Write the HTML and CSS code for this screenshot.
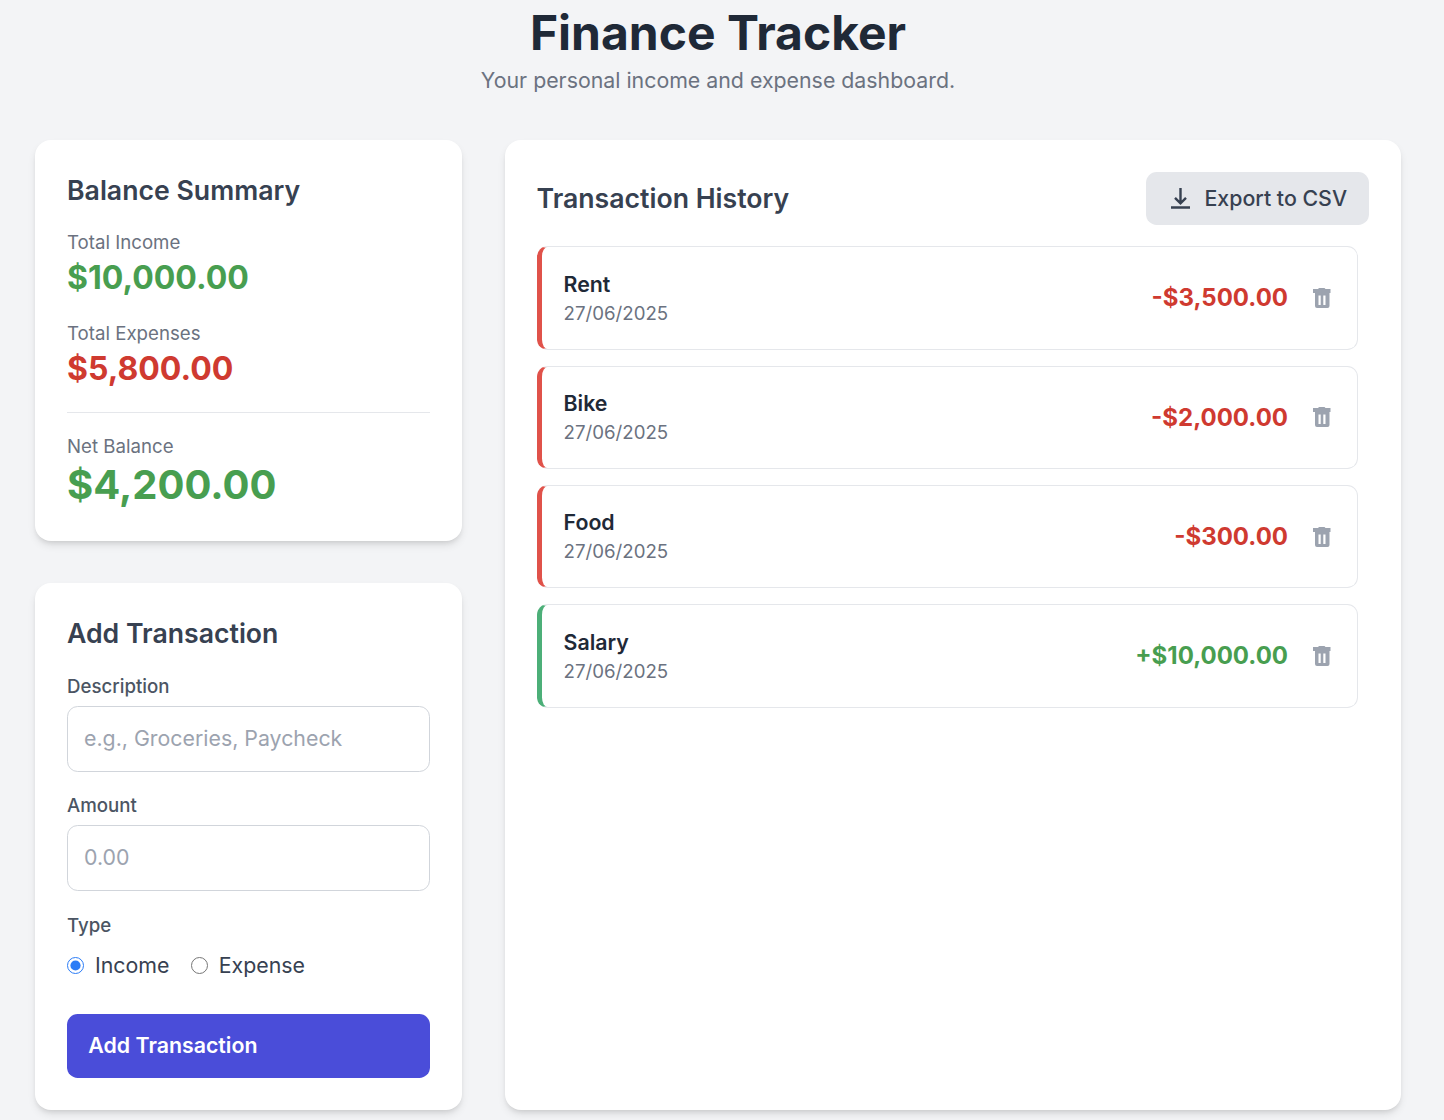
FILE: index.html
```html
<!DOCTYPE html>
<html lang="en">

<head>
    <meta charset="UTF-8">
    <meta name="viewport" content="width=device-width, initial-scale=1.0">
    <title>Finance Tracker</title>
    <link rel="stylesheet" href="styles.css">
</head>

<body>
    <header class="page-header">
        <h1>Finance Tracker</h1>
        <p>Your personal income and expense dashboard.</p>
    </header>

    <main class="layout">
        <div class="side">
            <section class="card summary">
                <h2>Balance Summary</h2>
                <p class="stat-label">Total Income</p>
                <p class="stat-value income">$10,000.00</p>
                <p class="stat-label">Total Expenses</p>
                <p class="stat-value expense">$5,800.00</p>
                <hr>
                <p class="stat-label">Net Balance</p>
                <p class="stat-value net income">$4,200.00</p>
            </section>

            <section class="card">
                <h2>Add Transaction</h2>
                <form>
                    <label class="field-label" for="description">Description</label>
                    <input type="text" id="description" placeholder="e.g., Groceries, Paycheck">
                    <label class="field-label" for="amount">Amount</label>
                    <input type="text" id="amount" placeholder="0.00">
                    <span class="field-label type-label">Type</span>
                    <div class="radios">
                        <label><input type="radio" name="type" checked> Income</label>
                        <label><input type="radio" name="type"> Expense</label>
                    </div>
                    <button type="button" class="add-btn">Add Transaction</button>
                </form>
            </section>
        </div>

        <section class="card history">
            <div class="history-head">
                <h2>Transaction History</h2>
                <button type="button" class="export-btn">
                    <svg width="27" height="27" viewBox="0 0 27 27" fill="none" stroke="currentColor" stroke-width="2.4">
                        <path d="M13.500 3v15M8 12.800l5.500 5.500 5.500-5.500M4 22.500h19" />
                    </svg>
                    Export to CSV
                </button>
            </div>
            <ul class="list">
                <li class="row out">
                    <div><p class="row-name">Rent</p><p class="row-date">27/06/2025</p></div>
                    <div class="row-right"><span class="row-amount expense">-$3,500.00</span>
                        <svg class="trash" width="19" height="22" viewBox="0 0 19 22" fill="currentColor"><path fill-rule="evenodd" d="M7 1h5.500l1 1h5v4h-17.500v-4h5zM3 6h14.500v13a2 2 0 0 1-2 2h-10.500a2 2 0 0 1-2-2zM6.500 8.500v9.500h2.200v-9.500zM11.300 8.500v9.500h2.200v-9.500z" /></svg>
                    </div>
                </li>
                <li class="row out">
                    <div><p class="row-name">Bike</p><p class="row-date">27/06/2025</p></div>
                    <div class="row-right"><span class="row-amount expense">-$2,000.00</span>
                        <svg class="trash" width="19" height="22" viewBox="0 0 19 22" fill="currentColor"><path fill-rule="evenodd" d="M7 1h5.500l1 1h5v4h-17.500v-4h5zM3 6h14.500v13a2 2 0 0 1-2 2h-10.500a2 2 0 0 1-2-2zM6.500 8.500v9.500h2.200v-9.500zM11.300 8.500v9.500h2.200v-9.500z" /></svg>
                    </div>
                </li>
                <li class="row out">
                    <div><p class="row-name">Food</p><p class="row-date">27/06/2025</p></div>
                    <div class="row-right"><span class="row-amount expense">-$300.00</span>
                        <svg class="trash" width="19" height="22" viewBox="0 0 19 22" fill="currentColor"><path fill-rule="evenodd" d="M7 1h5.500l1 1h5v4h-17.500v-4h5zM3 6h14.500v13a2 2 0 0 1-2 2h-10.500a2 2 0 0 1-2-2zM6.500 8.500v9.500h2.200v-9.500zM11.300 8.500v9.500h2.200v-9.500z" /></svg>
                    </div>
                </li>
                <li class="row in">
                    <div><p class="row-name">Salary</p><p class="row-date">27/06/2025</p></div>
                    <div class="row-right"><span class="row-amount income">+$10,000.00</span>
                        <svg class="trash" width="19" height="22" viewBox="0 0 19 22" fill="currentColor"><path fill-rule="evenodd" d="M7 1h5.500l1 1h5v4h-17.500v-4h5zM3 6h14.500v13a2 2 0 0 1-2 2h-10.500a2 2 0 0 1-2-2zM6.500 8.500v9.500h2.200v-9.500zM11.300 8.500v9.500h2.200v-9.500z" /></svg>
                    </div>
                </li>
            </ul>
        </section>
    </main>
</body>

</html>
```

FILE: styles.css
```css
* {
    box-sizing: border-box;
}

body {
    font-family: Inter, "Liberation Sans", sans-serif;
    margin: 0;
    padding: 0 43px 10px 35px;
    background-color: #f3f4f6;
    color: #1f2937;
}

p {
    margin: 0;
}

.page-header {
    text-align: center;
    height: 140px;
}

h1 {
    margin: 0;
    padding-top: 4px;
    font-size: 48px;
    line-height: 58px;
    font-weight: 700;
    color: #1f2937;
}

.page-header p {
    font-size: 21.33px;
    line-height: 28px;
    color: #6b7280;
    margin-top: 4px;
}

.layout {
    display: grid;
    grid-template-columns: repeat(3, 1fr);
    column-gap: 42.67px;
}

.side {
    display: flex;
    flex-direction: column;
    gap: 42.33px;
}

.card {
    background-color: #fff;
    border-radius: 16px;
    padding: 32px;
    box-shadow: 0 5px 8px -1px rgba(0, 0, 0, 0.1), 0 3px 5px -2px rgba(0, 0, 0, 0.1);
}

.history {
    grid-column: span 2;
}

h2 {
    margin: 0;
    font-size: 26.67px;
    line-height: 37.33px;
    font-weight: 600;
    color: #374151;
}

.summary h2 {
    margin-bottom: 20.67px;
}

.stat-label {
    font-size: 18.67px;
    line-height: 26.67px;
    color: #6b7280;
}

.stat-value {
    font-size: 32px;
    line-height: 42.67px;
    font-weight: 700;
    margin-bottom: 21.67px;
}

.stat-value.net {
    font-size: 40px;
    line-height: 48px;
    margin-bottom: 0;
}

.income {
    color: #489e50;
}

.expense {
    color: #cf3a30;
}

hr {
    border: none;
    border-top: 1px solid #e5e7eb;
    margin: 0 0 21.33px;
}

form {
    margin-top: 21.33px;
}

.field-label {
    display: block;
    font-size: 18.67px;
    line-height: 26.67px;
    font-weight: 500;
    color: #4b5563;
    margin-bottom: 5.33px;
}

.type-label {
    margin-top: 22px;
    margin-bottom: 9.33px;
}

input[type="text"] {
    display: block;
    width: 100%;
    height: 66px;
    padding: 0 16px 2px;
    margin-bottom: 21.33px;
    border: 1px solid #d1d5db;
    border-radius: 10.67px;
    font: inherit;
    font-size: 21.33px;
    color: #1f2937;
}

input::placeholder {
    color: #9ca3af;
}

.radios {
    display: flex;
    gap: 21.33px;
    font-size: 21.33px;
    line-height: 32px;
    color: #374151;
    margin-bottom: 33px;
}

.radios label {
    display: flex;
    align-items: center;
    gap: 11px;
}

.radios input {
    width: 17px;
    height: 17px;
    margin: 0;
    accent-color: #2b7cf6;
}

.add-btn {
    display: block;
    width: 100%;
    height: 64px;
    padding: 0 21.33px 2px;
    text-align: left;
    background-color: #4a4dd9;
    color: #fff;
    border: none;
    border-radius: 10.67px;
    font: inherit;
    font-size: 21.33px;
    font-weight: 600;
}

.history-head {
    display: flex;
    justify-content: space-between;
    align-items: center;
    margin-bottom: 21px;
}

.export-btn {
    display: flex;
    align-items: center;
    gap: 10.67px;
    height: 53.33px;
    padding: 0 22px 1px 20.67px;
    background-color: #e5e7eb;
    color: #374151;
    border: none;
    border-radius: 10.67px;
    font: inherit;
    font-size: 21.33px;
    font-weight: 500;
}

.list {
    list-style: none;
    margin: 0;
    padding: 0 11px 0 0;
    display: flex;
    flex-direction: column;
    gap: 16px;
}

.row {
    display: flex;
    justify-content: space-between;
    align-items: center;
    height: 103.33px;
    padding: 0 26px 0 22px;
    border: 1px solid #e5e7eb;
    border-radius: 10.67px;
}

.row.out {
    border-left: 5.33px solid #e0524a;
}

.row.in {
    border-left: 5.33px solid #4caf78;
}

.row-name {
    font-size: 21.33px;
    line-height: 30px;
    margin-bottom: 2px;
    font-weight: 600;
    color: #1f2937;
}

.row-date {
    font-size: 18.67px;
    line-height: 26.67px;
    color: #6b7280;
}

.row-right {
    display: flex;
    align-items: center;
    gap: 24px;
}

.row-amount {
    font-size: 24px;
    font-weight: 700;
}

.trash {
    color: #9ca3af;
    display: block;
}
```
